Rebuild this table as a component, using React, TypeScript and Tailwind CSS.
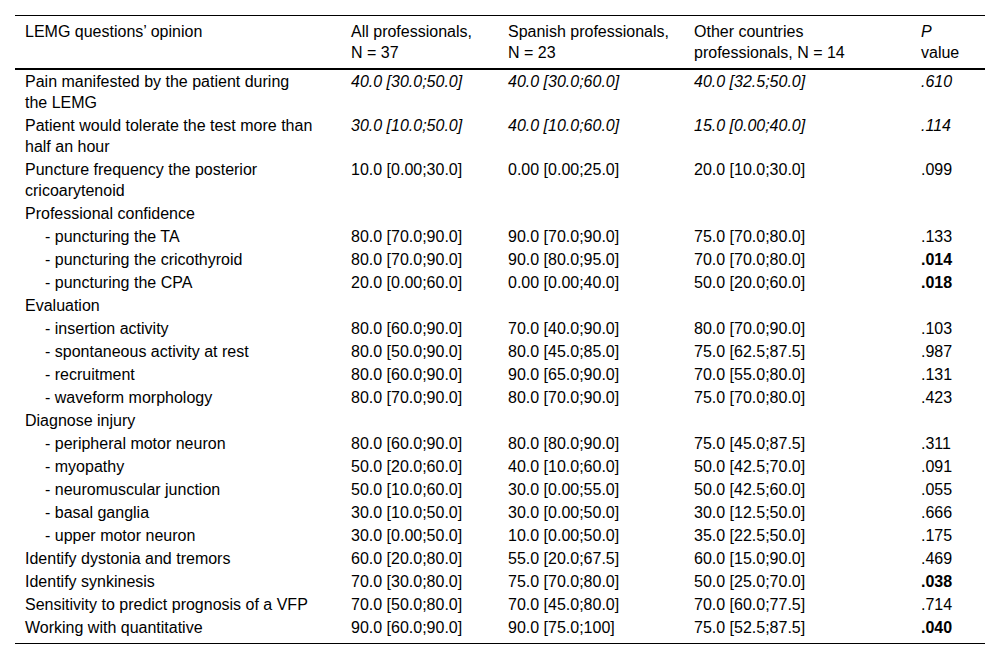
import { Fragment } from 'react';

type Row = {
  label: string[];
  indent?: boolean;
  values?: [string, string, string, string];
  italic?: boolean;
  bold?: boolean;
};

const rows: Row[] = [
  { label: ['Pain manifested by the patient during', 'the LEMG'], values: ['40.0 [30.0;50.0]', '40.0 [30.0;60.0]', '40.0 [32.5;50.0]', '.610'], italic: true },
  { label: ['Patient would tolerate the test more than', 'half an hour'], values: ['30.0 [10.0;50.0]', '40.0 [10.0;60.0]', '15.0 [0.00;40.0]', '.114'], italic: true },
  { label: ['Puncture frequency the posterior', 'cricoarytenoid'], values: ['10.0 [0.00;30.0]', '0.00 [0.00;25.0]', '20.0 [10.0;30.0]', '.099'] },
  { label: ['Professional confidence'] },
  { label: ['- puncturing the TA'], indent: true, values: ['80.0 [70.0;90.0]', '90.0 [70.0;90.0]', '75.0 [70.0;80.0]', '.133'] },
  { label: ['- puncturing the cricothyroid'], indent: true, values: ['80.0 [70.0;90.0]', '90.0 [80.0;95.0]', '70.0 [70.0;80.0]', '.014'], bold: true },
  { label: ['- puncturing the CPA'], indent: true, values: ['20.0 [0.00;60.0]', '0.00 [0.00;40.0]', '50.0 [20.0;60.0]', '.018'], bold: true },
  { label: ['Evaluation'] },
  { label: ['- insertion activity'], indent: true, values: ['80.0 [60.0;90.0]', '70.0 [40.0;90.0]', '80.0 [70.0;90.0]', '.103'] },
  { label: ['- spontaneous activity at rest'], indent: true, values: ['80.0 [50.0;90.0]', '80.0 [45.0;85.0]', '75.0 [62.5;87.5]', '.987'] },
  { label: ['- recruitment'], indent: true, values: ['80.0 [60.0;90.0]', '90.0 [65.0;90.0]', '70.0 [55.0;80.0]', '.131'] },
  { label: ['- waveform morphology'], indent: true, values: ['80.0 [70.0;90.0]', '80.0 [70.0;90.0]', '75.0 [70.0;80.0]', '.423'] },
  { label: ['Diagnose injury'] },
  { label: ['- peripheral motor neuron'], indent: true, values: ['80.0 [60.0;90.0]', '80.0 [80.0;90.0]', '75.0 [45.0;87.5]', '.311'] },
  { label: ['- myopathy'], indent: true, values: ['50.0 [20.0;60.0]', '40.0 [10.0;60.0]', '50.0 [42.5;70.0]', '.091'] },
  { label: ['- neuromuscular junction'], indent: true, values: ['50.0 [10.0;60.0]', '30.0 [0.00;55.0]', '50.0 [42.5;60.0]', '.055'] },
  { label: ['- basal ganglia'], indent: true, values: ['30.0 [10.0;50.0]', '30.0 [0.00;50.0]', '30.0 [12.5;50.0]', '.666'] },
  { label: ['- upper motor neuron'], indent: true, values: ['30.0 [0.00;50.0]', '10.0 [0.00;50.0]', '35.0 [22.5;50.0]', '.175'] },
  { label: ['Identify dystonia and tremors'], values: ['60.0 [20.0;80.0]', '55.0 [20.0;67.5]', '60.0 [15.0;90.0]', '.469'] },
  { label: ['Identify synkinesis'], values: ['70.0 [30.0;80.0]', '75.0 [70.0;80.0]', '50.0 [25.0;70.0]', '.038'], bold: true },
  { label: ['Sensitivity to predict prognosis of a VFP'], values: ['70.0 [50.0;80.0]', '70.0 [45.0;80.0]', '70.0 [60.0;77.5]', '.714'] },
  { label: ['Working with quantitative'], values: ['90.0 [60.0;90.0]', '90.0 [75.0;100]', '75.0 [52.5;87.5]', '.040'], bold: true },
];

export default function App() {
  return (
    <div className="min-h-[660px] bg-white px-[15px] pt-[15px] font-['Liberation_Sans',Arial,sans-serif] text-[16px] leading-[21px] text-black">
      <table className="w-[970px] table-fixed border-collapse">
        <colgroup>
          <col className="w-[326px]" />
          <col className="w-[157px]" />
          <col className="w-[186px]" />
          <col className="w-[227px]" />
          <col className="w-[74px]" />
        </colgroup>
        <thead>
          <tr className="border-t border-b-2 border-black align-top text-left">
            <th className="px-[10px] py-[5px] font-normal">LEMG questions’ opinion</th>
            <th className="px-[10px] py-[5px] font-normal">
              All professionals,
              <br />N = 37
            </th>
            <th className="px-[10px] py-[5px] font-normal">
              Spanish professionals,
              <br />N = 23
            </th>
            <th className="px-[10px] py-[5px] font-normal">
              Other countries
              <br />
              professionals, N = 14
            </th>
            <th className="px-[10px] py-[5px] font-normal">
              <i>P</i>
              <br />
              value
            </th>
          </tr>
        </thead>
        <tbody className="border-b border-black">
          {rows.map((r, i) => {
            const last = i === rows.length - 1;
            const pad = last ? 'pt-px pb-[5px]' : 'py-px';
            return (
              <tr key={i} className="align-top">
                <td className={`pr-[4px] whitespace-nowrap ${r.indent ? 'pl-[30px]' : 'pl-[10px]'} ${pad}`}>
                  {r.label.map((line, j) => (
                    <Fragment key={j}>
                      {j > 0 && <br />}
                      {line}
                    </Fragment>
                  ))}
                </td>
                {[0, 1, 2, 3].map((c) => (
                  <td
                    key={c}
                    className={`px-[10px] ${pad} ${r.italic ? 'italic' : ''} ${r.bold && c === 3 ? 'font-bold' : ''}`}
                  >
                    {r.values ? r.values[c] : ''}
                  </td>
                ))}
              </tr>
            );
          })}
        </tbody>
      </table>
    </div>
  );
}
